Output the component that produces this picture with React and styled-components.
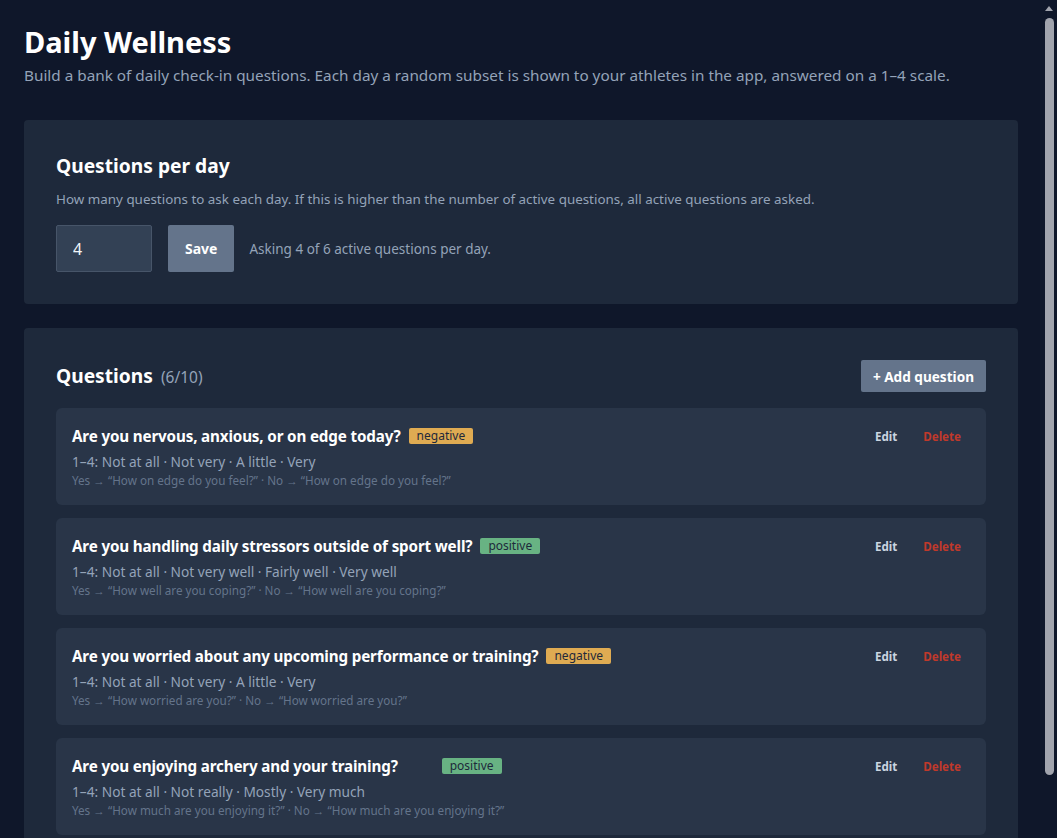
import React from "react";
import styled, { createGlobalStyle } from "styled-components";

const FONT = `"Noto Sans", "Open Sans", sans-serif`;

const Global = createGlobalStyle`
  html { background: #0f172a; }
  body { margin: 0; background: #0f172a; font-family: ${FONT}; color: #f1f5f9; }
  * { box-sizing: border-box; }
`;

const Page = styled.main`
  padding: 24px 39px 24px 24px;
  display: flex;
  flex-direction: column;
`;

const ScrollTrack = styled.div`
  position: fixed;
  top: 0;
  right: 0;
  width: 15px;
  height: 100vh;
  background: #0f172a;
  z-index: 10;
`;

const ScrollArrow = styled.div`
  position: absolute;
  top: 6px;
  left: 3px;
  width: 0;
  height: 0;
  border-left: 4px solid transparent;
  border-right: 4px solid transparent;
  border-bottom: 5px solid #a1a4ad;
`;

const ScrollThumb = styled.div`
  position: absolute;
  top: 18px;
  left: 3px;
  width: 9px;
  height: 757px;
  border-radius: 5px;
  background: #a1a4ad;
`;

const Header = styled.header`
  margin-bottom: 33px;
`;

const Title = styled.h1`
  margin: 0 0 3px;
  font-size: 29px;
  line-height: 36px;
  font-weight: 700;
  color: #ffffff;
`;

const Subtitle = styled.p`
  margin: 0;
  font-size: 15.3px;
  line-height: 24px;
  color: #94a3b8;
`;

const Card = styled.section`
  background: #1e293b;
  border-radius: 4px;
  padding: 30px 32px 32px;
  margin-bottom: 24px;
`;

const CardTitle = styled.h2`
  margin: 0;
  font-size: 19.2px;
  line-height: 32px;
  font-weight: 700;
  color: #ffffff;
`;

const Help = styled.p`
  margin: 7px 0 16px;
  font-size: 13.4px;
  line-height: 20px;
  color: #94a3b8;
`;

const FormRow = styled.div`
  display: flex;
  align-items: center;
  gap: 16px;
`;

const NumberInput = styled.input`
  width: 96px;
  height: 47px;
  padding: 0 16px;
  background: #334155;
  border: 1px solid #475569;
  border-radius: 2px;
  color: #f1f5f9;
  font-family: ${FONT};
  font-size: 16px;
  outline: none;
`;

const Button = styled.button`
  height: ${(p) => p.$h}px;
  padding: 0 ${(p) => p.$px}px;
  background: #64748b;
  border: none;
  border-radius: 2px;
  color: #ffffff;
  font-family: ${FONT};
  font-size: ${(p) => p.$fs}px;
  font-weight: 700;
  cursor: pointer;
`;

const Status = styled.span`
  font-size: 13.5px;
  color: #94a3b8;
  margin-left: -1px;
`;

const SectionHead = styled.div`
  display: flex;
  align-items: center;
  justify-content: space-between;
  margin: 2px 0 16px;
`;

const HeadTitle = styled.div`
  display: flex;
  align-items: baseline;
  gap: 8px;
`;

const Count = styled.span`
  font-size: 15.5px;
  color: #94a3b8;
`;

const List = styled.div`
  display: flex;
  flex-direction: column;
  gap: 13px;
`;

const QCard = styled.article`
  background: #293548;
  border-radius: 6px;
  padding: 16px 14px 16px 16px;
  display: flex;
  align-items: flex-start;
  justify-content: space-between;
  min-height: 97px;
`;

const QBody = styled.div`
  display: flex;
  flex-direction: column;
`;

const QTitleRow = styled.div`
  display: flex;
  align-items: center;
  gap: 8px;
  height: 24px;
`;

const QText = styled.span`
  font-size: 15.2px;
  letter-spacing: -0.15px;
  font-weight: 700;
  color: #ffffff;
`;

const Badge = styled.span`
  margin-left: ${(p) => p.$offset || 0}px;
  padding: 0 8px;
  height: 16px;
  line-height: 16px;
  border-radius: 2px;
  font-size: 12px;
  color: #1e293b;
  background: ${(p) => (p.$tone === "negative" ? "#dfab52" : "#68b383")};
`;

const Scale = styled.div`
  margin-top: 4px;
  font-size: 13.7px;
  line-height: 20px;
  color: #94a3b8;
`;

const Follow = styled.div`
  font-size: 11.7px;
  line-height: 17px;
  color: #64748b;
`;

const Actions = styled.div`
  display: flex;
  gap: 4px;
  margin-top: 3px;
`;

const LinkBtn = styled.button`
  background: transparent;
  border: none;
  padding: 2px 11px;
  font-family: ${FONT};
  font-size: 11.6px;
  font-weight: 700;
  color: ${(p) => (p.$danger ? "#c0392b" : "#cbd5e1")};
  cursor: pointer;
`;

const questions = [
  {
    q: "Are you nervous, anxious, or on edge today?",
    tone: "negative",
    scale: "1–4: Not at all · Not very · A little · Very",
    yes: "How on edge do you feel?",
    no: "How on edge do you feel?",
  },
  {
    q: "Are you handling daily stressors outside of sport well?",
    tone: "positive",
    scale: "1–4: Not at all · Not very well · Fairly well · Very well",
    yes: "How well are you coping?",
    no: "How well are you coping?",
  },
  {
    q: "Are you worried about any upcoming performance or training?",
    tone: "negative",
    scale: "1–4: Not at all · Not very · A little · Very",
    yes: "How worried are you?",
    no: "How worried are you?",
  },
  {
    q: "Are you enjoying archery and your training?",
    tone: "positive",
    offset: 36,
    scale: "1–4: Not at all · Not really · Mostly · Very much",
    yes: "How much are you enjoying it?",
    no: "How much are you enjoying it?",
  },
  {
    q: "Are you sleeping well?",
    tone: "positive",
    scale: "1–4: Not at all · Not very well · Fairly well · Very well",
    yes: "How well did you sleep?",
    no: "How well did you sleep?",
  },
  {
    q: "Do you feel physically fatigued?",
    tone: "negative",
    scale: "1–4: Not at all · Not very · A little · Very",
    yes: "How fatigued do you feel?",
    no: "How fatigued do you feel?",
  },
];

export default function App() {
  return (
    <>
      <Global />
      <ScrollTrack aria-hidden="true">
        <ScrollArrow />
        <ScrollThumb />
      </ScrollTrack>
      <Page>
        <Header>
          <Title>Daily Wellness</Title>
          <Subtitle>
            Build a bank of daily check-in questions. Each day a random subset is shown to your athletes in the app, answered on a 1–4 scale.
          </Subtitle>
        </Header>

        <Card>
          <CardTitle>Questions per day</CardTitle>
          <Help>
            How many questions to ask each day. If this is higher than the number of active questions, all active questions are asked.
          </Help>
          <FormRow>
            <NumberInput type="text" defaultValue="4" />
            <Button $h={47} $px={17} $fs={14}>Save</Button>
            <Status>Asking 4 of 6 active questions per day.</Status>
          </FormRow>
        </Card>

        <Card>
          <SectionHead>
            <HeadTitle>
              <CardTitle>Questions</CardTitle>
              <Count>(6/10)</Count>
            </HeadTitle>
            <Button $h={32} $px={12} $fs={13.6}>+ Add question</Button>
          </SectionHead>
          <List>
            {questions.map((item, i) => (
              <QCard key={i}>
                <QBody>
                  <QTitleRow>
                    <QText>{item.q}</QText>
                    <Badge $tone={item.tone} $offset={item.offset}>{item.tone}</Badge>
                  </QTitleRow>
                  <Scale>{item.scale}</Scale>
                  <Follow>
                    Yes → “{item.yes}” · No → “{item.no}”
                  </Follow>
                </QBody>
                <Actions>
                  <LinkBtn>Edit</LinkBtn>
                  <LinkBtn $danger>Delete</LinkBtn>
                </Actions>
              </QCard>
            ))}
          </List>
        </Card>
      </Page>
    </>
  );
}
